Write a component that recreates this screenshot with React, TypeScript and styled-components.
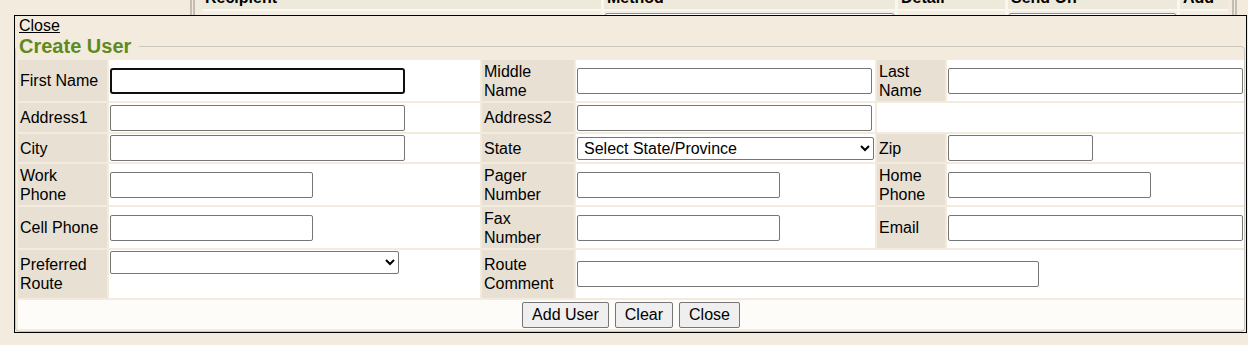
import React from 'react';
import styled, { createGlobalStyle } from 'styled-components';

const FONT = '"Liberation Sans", Arial, sans-serif';

const GlobalStyle = createGlobalStyle`
  html, body {
    margin: 0;
    padding: 0;
    background: #f3ecde;
  }
  body {
    font-family: ${FONT};
    font-size: 16px;
    color: #000;
  }
  #root {
    position: relative;
    width: 1248px;
    height: 345px;
    overflow: hidden;
  }
`;

/* page underneath the dialog */

const Backdrop = styled.div`
  margin-left: 190px;
  width: 1047px;
  height: 30px;
  box-sizing: border-box;
  overflow: hidden;
  border-left: 5px double #c2beb4;
  border-right: 5px double #c2beb4;
  padding-left: 7px;
`;

const BackGrid = styled.div`
  display: grid;
  grid-template-columns: 399px 291px 107px 169px 48px;
  grid-template-rows: 22px 30px;
  column-gap: 3px;
  row-gap: 2px;
  margin-top: -13px;
  width: fit-content;
  background: #f9f7f2;
`;

const HeadCell = styled.div`
  background: #eeeadb;
  font-weight: bold;
  line-height: 18px;
  padding: 2px 4px 0 3px;
`;

const BackCell = styled.div`
  background: #f3eee1;
`;

const BackInput = styled.div<{ $w: number }>`
  width: ${(p) => p.$w}px;
  height: 24px;
  margin: 2px 0 0 1px;
  box-sizing: border-box;
  border: 1px solid #8d8d8d;
  border-radius: 2px;
  background: #fff;
`;

/* dialog */

const Dialog = styled.div`
  position: absolute;
  top: 15px;
  left: 14px;
  width: 1233px;
  height: 318px;
  box-sizing: border-box;
  border: 1px solid #000;
  background: #f3ecde;
`;

const CloseLink = styled.a`
  display: block;
  width: fit-content;
  margin-left: 4px;
  line-height: 19px;
  color: #000;
  text-decoration: underline;
  cursor: pointer;
`;

const Fieldset = styled.fieldset`
  margin: 0;
  padding: 0;
  width: 1230px;
  box-sizing: border-box;
  min-inline-size: auto;
  border: 1px solid #c9c6be;
  border-radius: 4px;
`;

const Legend = styled.legend`
  padding: 0 8px 0 3px;
  font-size: 20px;
  line-height: 23px;
  font-weight: bold;
  color: #5f8a1e;
`;

const FormGrid = styled.div`
  display: grid;
  grid-template-columns: 89px 371px 92px 299px 68px 297px;
  grid-template-rows: 41px 29px 28px 41px 41px 48px 29px;
  gap: 2px;
  padding: 2px 0 2px 2px;
`;

const LabelCell = styled.div`
  display: flex;
  align-items: center;
  padding: 0 4px 0 2px;
  background: #e8e1d3;
  line-height: 19px;
  white-space: pre-line;
`;

const ValueCell = styled.div<{ $span?: number; $top?: boolean }>`
  display: flex;
  align-items: ${(p) => (p.$top ? 'flex-start' : 'center')};
  grid-column: span ${(p) => p.$span ?? 1};
  padding: ${(p) => (p.$top ? '1px 1px 0' : '0 1px')};
  background: #fff;
`;

const TextInput = styled.input<{ $w: number }>`
  width: ${(p) => p.$w}px;
  height: 26px;
  box-sizing: border-box;
  margin: 0;
  padding: 1px 3px;
  border: 1px solid #767676;
  border-radius: 2px;
  background: #fff;
  font: 16px ${FONT};
  color: #000;
  outline: none;

  &:focus {
    border: 2px solid #101010;
    border-radius: 3px;
    padding: 0 2px;
  }
`;

const Select = styled.select<{ $w: number }>`
  width: ${(p) => p.$w}px;
  height: 23px;
  box-sizing: border-box;
  margin: 0;
  padding: 0 0 0 2px;
  border: 1px solid #767676;
  border-radius: 2px;
  background: #fff;
  font: 16px ${FONT};
  color: #000;
`;

const ButtonRow = styled.div`
  grid-column: 1 / -1;
  display: flex;
  justify-content: center;
  align-items: center;
  gap: 6px;
  background: #fdfcf9;
`;

const Button = styled.button`
  height: 26px;
  margin: 0;
  padding: 0 9px;
  border: 1px solid #767676;
  border-radius: 2px;
  background: #efefef;
  font: 16px ${FONT};
  color: #000;
`;

export default function App() {
  return (
    <>
      <GlobalStyle />
      <Backdrop>
        <BackGrid>
          <HeadCell>Recipient</HeadCell>
          <HeadCell>Method</HeadCell>
          <HeadCell>Detail</HeadCell>
          <HeadCell>Send On</HeadCell>
          <HeadCell>Add</HeadCell>
          <BackCell />
          <BackCell>
            <BackInput $w={289} />
          </BackCell>
          <BackCell />
          <BackCell>
            <BackInput $w={167} />
          </BackCell>
          <BackCell />
        </BackGrid>
      </Backdrop>

      <Dialog>
        <CloseLink>Close</CloseLink>
        <Fieldset>
          <Legend>Create User</Legend>
          <FormGrid>
            <LabelCell>First Name</LabelCell>
            <ValueCell>
              <TextInput $w={295} autoFocus />
            </ValueCell>
            <LabelCell>{'Middle\nName'}</LabelCell>
            <ValueCell>
              <TextInput $w={295} />
            </ValueCell>
            <LabelCell>{'Last\nName'}</LabelCell>
            <ValueCell>
              <TextInput $w={295} />
            </ValueCell>

            <LabelCell>Address1</LabelCell>
            <ValueCell>
              <TextInput $w={295} />
            </ValueCell>
            <LabelCell>Address2</LabelCell>
            <ValueCell>
              <TextInput $w={295} />
            </ValueCell>
            <ValueCell $span={2} />

            <LabelCell>City</LabelCell>
            <ValueCell>
              <TextInput $w={295} />
            </ValueCell>
            <LabelCell>State</LabelCell>
            <ValueCell>
              <Select $w={297} defaultValue="">
                <option value="">Select State/Province</option>
              </Select>
            </ValueCell>
            <LabelCell>Zip</LabelCell>
            <ValueCell>
              <TextInput $w={145} />
            </ValueCell>

            <LabelCell>{'Work\nPhone'}</LabelCell>
            <ValueCell>
              <TextInput $w={203} />
            </ValueCell>
            <LabelCell>{'Pager\nNumber'}</LabelCell>
            <ValueCell>
              <TextInput $w={203} />
            </ValueCell>
            <LabelCell>{'Home\nPhone'}</LabelCell>
            <ValueCell>
              <TextInput $w={203} />
            </ValueCell>

            <LabelCell>Cell Phone</LabelCell>
            <ValueCell>
              <TextInput $w={203} />
            </ValueCell>
            <LabelCell>{'Fax\nNumber'}</LabelCell>
            <ValueCell>
              <TextInput $w={203} />
            </ValueCell>
            <LabelCell>Email</LabelCell>
            <ValueCell>
              <TextInput $w={295} />
            </ValueCell>

            <LabelCell>{'Preferred\nRoute'}</LabelCell>
            <ValueCell $top>
              <Select $w={289} defaultValue="">
                <option value=""></option>
              </Select>
            </ValueCell>
            <LabelCell>{'Route\nComment'}</LabelCell>
            <ValueCell $span={3}>
              <TextInput $w={462} />
            </ValueCell>

            <ButtonRow>
              <Button>Add User</Button>
              <Button>Clear</Button>
              <Button>Close</Button>
            </ButtonRow>
          </FormGrid>
        </Fieldset>
      </Dialog>
    </>
  );
}
